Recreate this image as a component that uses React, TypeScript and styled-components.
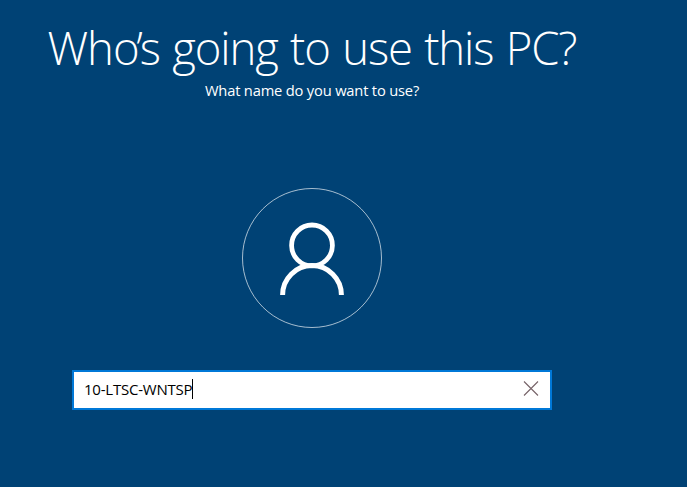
import styled, { createGlobalStyle } from "styled-components";

const GlobalStyle = createGlobalStyle`
	* {
		box-sizing: border-box;
	}

	body {
		margin: 0;
		background: #004275;
		font-family: "Open Sans", "Noto Sans", sans-serif;
	}
`;

const Page = styled.main`
	display: flex;
	flex-direction: column;
	align-items: center;
	width: 624px;
	height: 487px;
	color: white;
`;

const Title = styled.h1`
	margin: 17px 0 0;
	font-size: 45.5px;
	font-weight: 300;
	line-height: 60px;
	letter-spacing: -1.1px;
	word-spacing: 1.6px;
	white-space: nowrap;
`;

const TightPair = styled.span`
	letter-spacing: -3.2px;
`;

const Subtitle = styled.p`
	margin: 3px 0 0;
	font-size: 14.7px;
	line-height: 20px;
	letter-spacing: -0.18px;
	white-space: nowrap;
`;

const Avatar = styled.div`
	display: flex;
	width: 140px;
	height: 140px;
	margin-top: 88px;
`;

const NameField = styled.div`
	display: flex;
	align-items: center;
	width: 480px;
	height: 40px;
	margin-top: 42px;
	padding: 0 11px 0 10px;
	border: 2px solid #0078d7;
	background: white;
	color: black;
`;

const NameText = styled.span`
	margin-bottom: 2px;
	font-size: 15px;
	line-height: 20px;
	letter-spacing: -0.22px;
	white-space: nowrap;
`;

const Caret = styled.span`
	width: 1px;
	height: 20px;
	margin-bottom: 2px;
	background: black;
`;

const ClearButton = styled.button`
	display: flex;
	margin: 0 0 2px auto;
	padding: 0;
	border: 0;
	background: none;
`;

const App = () => {
	return <>
		<GlobalStyle />
		<Page>
			<Title>Wh<TightPair>o’</TightPair>s going to use this PC?</Title>
			<Subtitle>What name do you want to use?</Subtitle>
			<Avatar>
				<svg width="140" height="140" viewBox="0 0 140 140" fill="none" stroke="white">
					<circle cx="70" cy="70" r="69.5" strokeOpacity="0.65" />
					<circle cx="70" cy="57.4" r="20.4" strokeWidth="4.8" />
					<path d="M40.6 107a29.4 29.4 0 0 1 58.8 0" strokeWidth="5" />
				</svg>
			</Avatar>
			<NameField>
				<NameText>10-LTSC-WNTSP</NameText>
				<Caret />
				<ClearButton aria-label="Clear">
					<svg width="16" height="16" viewBox="0 0 16 16" stroke="#766368" strokeWidth="1.1">
						<path d="M1 0.5l14 14M15 0.5L1 14.5" />
					</svg>
				</ClearButton>
			</NameField>
		</Page>
	</>;
};

export default App;
